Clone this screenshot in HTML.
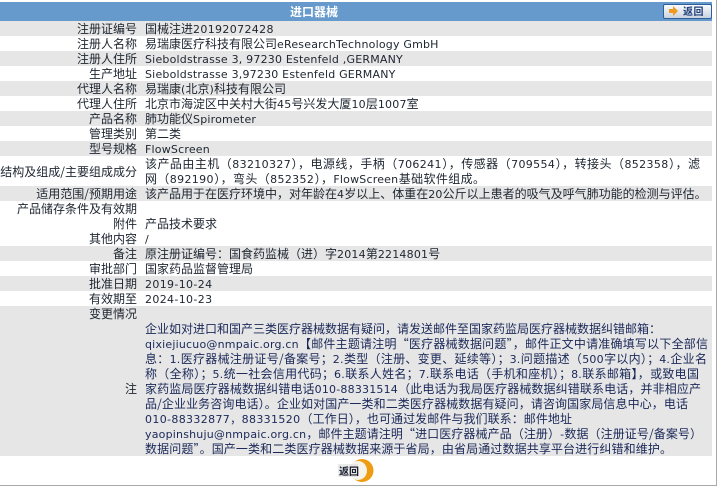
<!DOCTYPE html>
<html lang="zh"><head><meta charset="utf-8"><title>进口器械</title>
<style>
html,body{margin:0;padding:0;background:#fff}
#p{position:relative;width:719px;height:487px;overflow:hidden;background:#fff;font:12px/15px "Noto Sans CJK SC","Liberation Sans",sans-serif;color:#1d2530}
#p i{font:11px/15px "DejaVu Sans","Liberation Sans",sans-serif;letter-spacing:.2px}
#p i.d{letter-spacing:.35px}
.g{position:absolute;left:0;width:712px;background:#e6e6e6}
.k{position:absolute;left:0;width:137px;height:15px;text-align:right;white-space:nowrap}
.v{position:absolute;left:145px;height:15px;white-space:nowrap}
.j{text-align:justify;text-align-last:justify;white-space:normal;overflow:visible}
.n{color:#1a2858}
</style></head><body><div id="p">
<div style="position:absolute;left:0;top:2px;width:712px;height:19px;background:#6699cc"></div>
<div style="position:absolute;left:290px;top:4px;color:#fff;font-weight:bold">进口器械</div>
<div style="position:absolute;left:663px;top:4px;width:47px;height:13px;border:1px solid #2d5f9a;border-radius:2px;background:linear-gradient(#fafbfd,#c9d3df)"></div>
<svg style="position:absolute;left:669px;top:6px" width="10" height="10" viewBox="0 0 10 10"><path d="M0 3h4V0l5 5-5 5V7H0z" fill="#ee9a22"/></svg>
<div style="position:absolute;left:683px;top:3px;font-weight:bold;font-size:10px;letter-spacing:.5px;color:#1f3f7a">返回</div>

<div class="g" style="top:21px;height:15px"></div>
<div class="g" style="top:51px;height:15px"></div>
<div class="g" style="top:81px;height:15px"></div>
<div class="g" style="top:111px;height:15px"></div>
<div class="g" style="top:141px;height:15px"></div>
<div class="g" style="top:186px;height:15px"></div>
<div class="g" style="top:246px;height:15px"></div>
<div class="g" style="top:276px;height:15px"></div>
<div class="g" style="top:306px;height:150px"></div>

<div class="k" style="top:21px">注册证编号</div><div class="v" style="top:21px">国械注进<i class="d">20192072428</i></div>
<div class="k" style="top:36px">注册人名称</div><div class="v" style="top:36px">易瑞康医疗科技有限公司<i>eResearchTechnology GmbH</i></div>
<div class="k" style="top:51px">注册人住所</div><div class="v" style="top:51px"><i>Sieboldstrasse 3, 97230 Estenfeld ,GERMANY</i></div>
<div class="k" style="top:66px">生产地址</div><div class="v" style="top:66px"><i>Sieboldstrasse 3,97230 Estenfeld GERMANY</i></div>
<div class="k" style="top:81px">代理人名称</div><div class="v" style="top:81px">易瑞康<i>(</i>北京<i>)</i>科技有限公司</div>
<div class="k" style="top:96px">代理人住所</div><div class="v" style="top:96px">北京市海淀区中关村大街<i>45</i>号兴发大厦<i>10</i>层<i>1007</i>室</div>
<div class="k" style="top:111px">产品名称</div><div class="v" style="top:111px">肺功能仪<i>Spirometer</i></div>
<div class="k" style="top:126px">管理类别</div><div class="v" style="top:126px">第二类</div>
<div class="k" style="top:141px">型号规格</div><div class="v" style="top:141px"><i>FlowScreen</i></div>
<div class="k" style="top:164px">结构及组成/主要组成成分</div>
<div class="v j" style="top:156px;width:555px">该产品由主机（<i class="d">83210327</i>），电源线，手柄（<i class="d">706241</i>），传感器（<i class="d">709554</i>），转接头（<i class="d">852358</i>），滤</div>
<div class="v j" style="top:171px;width:340px">网（<i class="d">892190</i>），弯头（<i class="d">852352</i>），<i>FlowScreen</i>基础软件组成。</div>
<div class="k" style="top:186px">适用范围/预期用途</div><div class="v" style="top:186px">该产品用于在医疗环境中，对年龄在<i>4</i>岁以上、体重在<i>20</i>公斤以上患者的吸气及呼气肺功能的检测与评估。</div>
<div class="k" style="top:201px">产品储存条件及有效期</div>
<div class="k" style="top:216px">附件</div><div class="v" style="top:216px">产品技术要求</div>
<div class="k" style="top:231px">其他内容</div><div class="v" style="top:231px"><i>/</i></div>
<div class="k" style="top:246px">备注</div><div class="v" style="top:246px">原注册证编号：国食药监械（进）字<i>2014</i>第<i>2214801</i>号</div>
<div class="k" style="top:261px">审批部门</div><div class="v" style="top:261px">国家药品监督管理局</div>
<div class="k" style="top:276px">批准日期</div><div class="v" style="top:276px"><i class="d">2019-10-24</i></div>
<div class="k" style="top:291px">有效期至</div><div class="v" style="top:291px"><i class="d">2024-10-23</i></div>
<div class="k" style="top:306px">变更情况</div>
<div class="k" style="top:381px">注</div>

<div class="v n j" style="top:321px;width:516px">企业如对进口和国产三类医疗器械数据有疑问，请发送邮件至国家药监局医疗器械数据纠错邮箱：</div>
<div class="v n j" style="top:336px;width:563px"><i>qixiejiucuo@nmpaic.org.cn</i>【邮件主题请注明“医疗器械数据问题”，邮件正文中请准确填写以下全部信</div>
<div class="v n j" style="top:351px;width:562px">息：<i>1.</i>医疗器械注册证号/备案号；<i>2.</i>类型（注册、变更、延续等）；<i>3.</i>问题描述（<i>500</i>字以内）；<i>4.</i>企业名</div>
<div class="v n j" style="top:366px;width:554px">称（全称）；<i>5.</i>统一社会信用代码；<i>6.</i>联系人姓名；<i>7.</i>联系电话（手机和座机）；<i>8.</i>联系邮箱】，或致电国</div>
<div class="v n j" style="top:381px;width:556px">家药监局医疗器械数据纠错电话<i>010-88331514</i>（此电话为我局医疗器械数据纠错联系电话，并非相应产</div>
<div class="v n j" style="top:396px;width:543px">品/企业业务咨询电话）。企业如对国产一类和二类医疗器械数据有疑问，请咨询国家局信息中心，电话</div>
<div class="v n j" style="top:411px;width:427px"><i class="d">010-88332877，88331520</i>（工作日），也可通过发邮件与我们联系：邮件地址</div>
<div class="v n j" style="top:426px;width:557px"><i>yaopinshuju@nmpaic.org.cn</i>，邮件主题请注明“进口医疗器械产品（注册）<i>-</i>数据（注册证号/备案号）</div>
<div class="v n j" style="top:441px;width:527px">数据问题”。国产一类和二类医疗器械数据来源于省局，由省局通过数据共享平台进行纠错和维护。</div>

<svg style="position:absolute;left:336px;top:457px" width="40" height="27" viewBox="0 0 40 27">
<circle cx="26" cy="13.5" r="11.5" fill="#ee9d12"/>
<ellipse cx="22" cy="13.5" rx="9" ry="9.5" fill="#f6f3ea"/>
<rect x="2" y="7" width="20" height="13" fill="#d9d9d9" opacity=".55"/>
</svg>
<div style="position:absolute;left:339px;top:463px;font-size:10px;font-weight:bold;color:#1a2030">返回</div>

<div style="position:absolute;left:716px;top:0;width:1px;height:485px;background:#a8a8a8"></div>
<div style="position:absolute;left:0;top:485px;width:717px;height:1px;background:#a8a8a8"></div>
</div></body></html>
